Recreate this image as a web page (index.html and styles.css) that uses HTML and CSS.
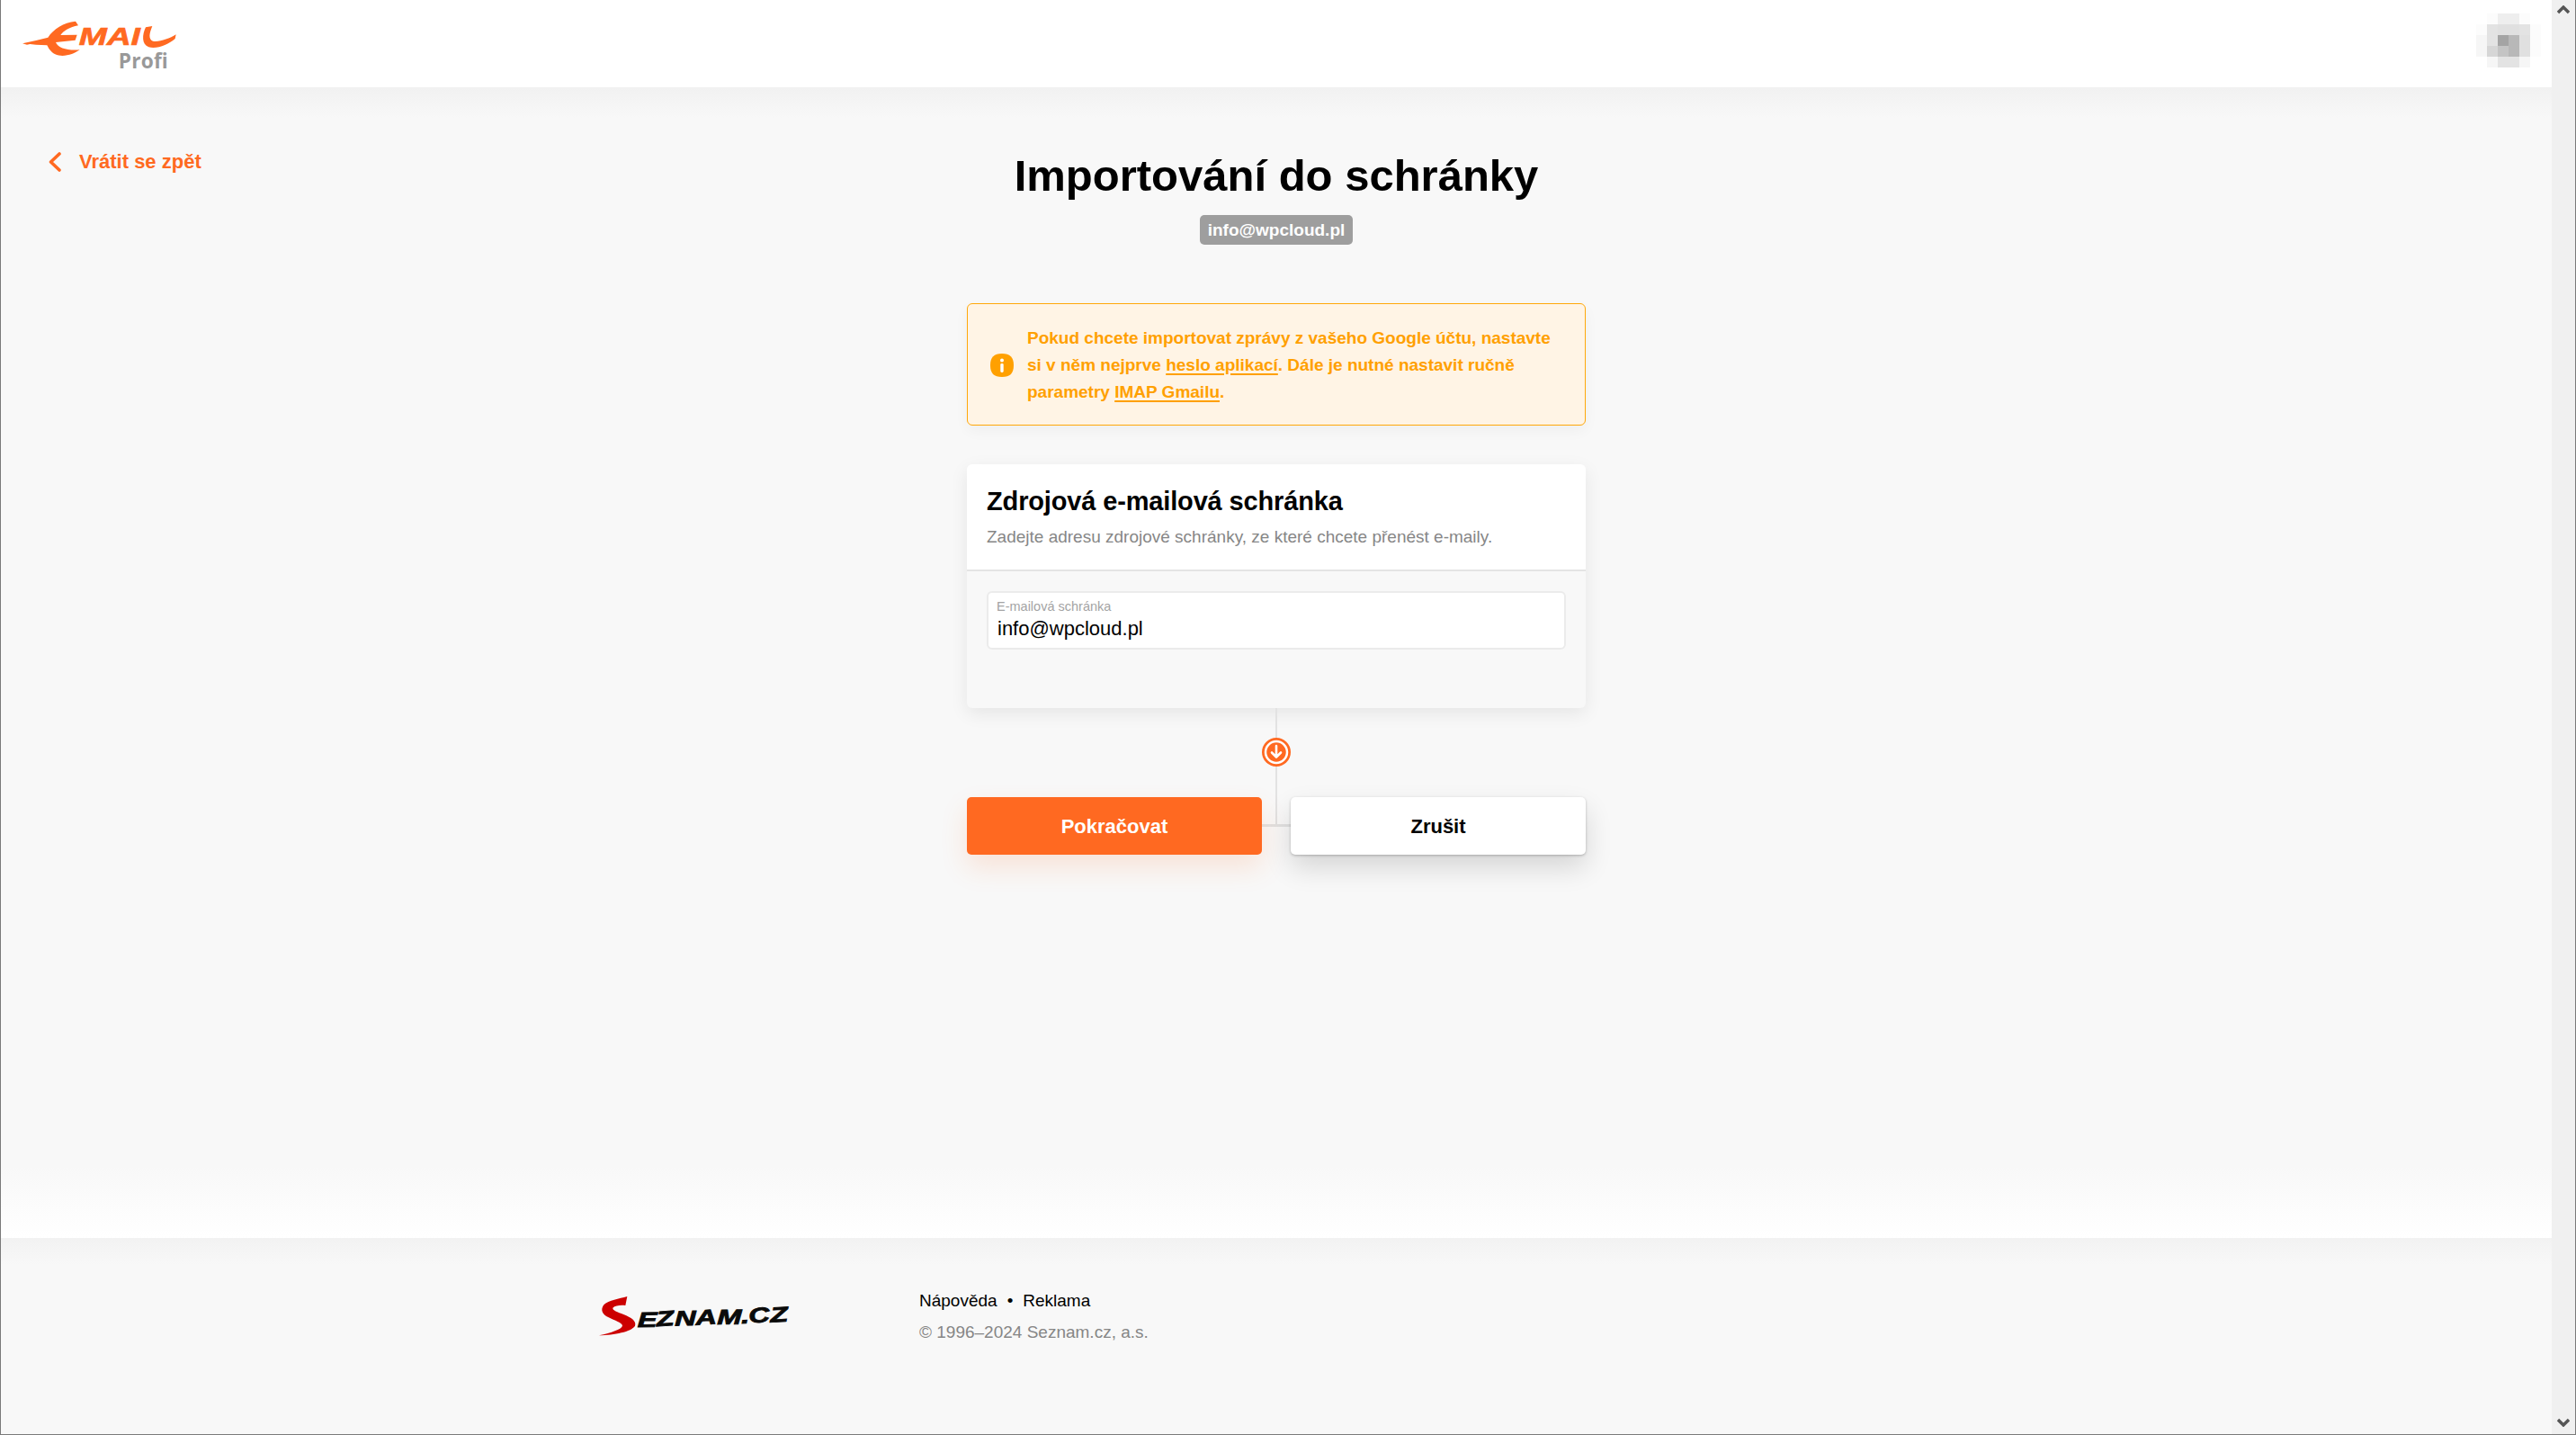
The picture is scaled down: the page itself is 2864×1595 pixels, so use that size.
FILE: index.html
```html
<!DOCTYPE html>
<html lang="cs">
<head>
<meta charset="utf-8">
<title>Importování do schránky</title>
<link rel="stylesheet" href="styles.css">
</head>
<body>
<div class="window">
  <div class="page">
    <header class="topbar">
      <a class="logo" href="#">
        <svg class="logo-svg" viewBox="0 0 540 210" width="180" height="70">
          <path class="brand-fill" d="M15 100 L60 90 L100 80 C118 52 152 30 192 26 L201 40 C172 46 152 58 142 72 L197 71 L191 89 L126 96 C134 116 165 124 206 121 C186 136 150 148 124 136 C108 128 101 114 97 106 L60 104 L40 102 L30 104 Z"/>
          <text class="logo-mail" x="203" y="104" textLength="205" lengthAdjust="spacingAndGlyphs">MAI</text>
          <path class="brand-fill" d="M426 46 L448 42 C438 66 434 86 450 92 C470 96 505 84 527 70 L524 84 C502 104 462 120 436 112 C412 104 414 70 426 46 Z"/>
          <text class="logo-profi" x="335" y="184" textLength="165">Profi</text>
        </svg>
      </a>
      <div class="avatar" aria-hidden="true">
        <i class="c0"></i><i class="c1"></i><i class="c2"></i><i class="c2"></i><i class="c1"></i><i class="c0"></i>
        <i class="c1"></i><i class="c3"></i><i class="c4"></i><i class="c4"></i><i class="c3"></i><i class="c1"></i>
        <i class="c5"></i><i class="c3"></i><i class="c8"></i><i class="c7"></i><i class="c4"></i><i class="c1"></i>
        <i class="c5"></i><i class="c4b"></i><i class="c6"></i><i class="c7"></i><i class="c4"></i><i class="c1"></i>
        <i class="c0"></i><i class="c5"></i><i class="c3"></i><i class="c3"></i><i class="c5"></i><i class="c0"></i>
      </div>
    </header>

    <main class="main">
      <a class="back" href="#">
        <svg class="back-icon" viewBox="0 0 14 22" width="14" height="22"><path d="M12 2 L2.5 11 L12 20"/></svg>
        <span>Vrátit se zpět</span>
      </a>
      <section class="column">
        <h1 class="title">Importování do schránky</h1>
        <div class="pill-row"><span class="pill">info@wpcloud.pl</span></div>

        <div class="alert">
          <svg class="alert-icon" viewBox="0 0 26 26" width="26" height="26">
            <path class="alert-shape" d="M13 0 C22 0 26 4 26 13 C26 22 22 26 13 26 C4 26 0 22 0 13 C0 4 4 0 13 0 Z"/>
            <circle class="alert-i" cx="13" cy="7.5" r="2"/>
            <rect class="alert-i" x="11.3" y="11" width="3.4" height="10" rx="1.4"/>
          </svg>
          <p class="alert-text">Pokud chcete importovat zprávy z vašeho Google účtu, nastavte si v něm nejprve <a href="#">heslo aplikací</a>. Dále je nutné nastavit ručně parametry <a href="#">IMAP Gmailu</a>.</p>
        </div>

        <div class="card">
          <div class="card-head">
            <h2 class="card-title">Zdrojová e-mailová schránka</h2>
            <p class="card-sub">Zadejte adresu zdrojové schránky, ze které chcete přenést e-maily.</p>
          </div>
          <div class="card-body">
            <div class="field">
              <label class="field-label">E-mailová schránka</label>
              <div class="field-value">info@wpcloud.pl</div>
            </div>
          </div>
        </div>

        <div class="connector">
          <svg class="connector-icon" viewBox="0 0 32 32" width="32" height="32">
            <circle class="conn-disc" cx="16" cy="16" r="16"/>
            <circle class="conn-ring" cx="16" cy="16" r="12"/>
            <path class="conn-arrow" d="M16 9 V21 M11 16.5 L16 21.5 L21 16.5"/>
          </svg>
        </div>

        <div class="actions">
          <button class="btn btn-primary">Pokračovat</button>
          <button class="btn btn-secondary">Zrušit</button>
        </div>
      </section>
    </main>

    <footer class="footer">
      <svg class="seznam" viewBox="0 0 675 180" width="225" height="60">
        <path class="seznam-s" d="M112 18 L106 48 C90 46 72 48 64 56 C62 64 80 70 100 78 C125 88 144 100 138 116 C125 136 70 146 18 148 C60 138 92 128 96 116 C96 106 70 98 50 88 C28 78 22 62 34 46 C50 30 85 26 112 18 Z"/>
        <text class="seznam-text" x="146" y="120" textLength="504" lengthAdjust="spacingAndGlyphs" rotate="2 -3 1 -2 2 0 -4 -2" transform="rotate(-2 146 120)">EZNAM.CZ</text>
      </svg>
      <div class="footer-text">
        <nav class="footer-links"><a href="#">Nápověda</a><span class="dot">•</span><a href="#">Reklama</a></nav>
        <p class="copyright">© 1996–2024 Seznam.cz, a.s.</p>
      </div>
    </footer>
  </div>

  <div class="scrollbar">
    <svg viewBox="0 0 14 10" width="14" height="10"><path d="M1 8 L7 2 L13 8"/></svg>
    <svg viewBox="0 0 14 10" width="14" height="10"><path d="M1 2 L7 8 L13 2"/></svg>
  </div>
</div>
</body>
</html>
```

FILE: styles.css
```css
* { box-sizing: border-box; }
html, body { margin: 0; padding: 0; }
body { font-family: "Liberation Sans", Arial, sans-serif; color: #000; background: #fff; }
a { color: inherit; }

.window {
  width: 2864px; height: 1595px;
  display: flex;
  border-left: 1px solid #7a7a7a;
  border-right: 1px solid #7a7a7a;
  border-bottom: 1px solid #7a7a7a;
  overflow: hidden;
}
.page { flex: 1; display: flex; flex-direction: column; min-width: 0; }

/* header */
.topbar {
  height: 97px; flex: none;
  background: #fff;
  display: flex; justify-content: space-between;
  padding: 15px 12px 0 19px;
}
.logo { display: block; height: 70px; }
.logo-svg { display: block; }
.brand-fill { fill: #ff6921; }
.logo-mail { font: italic 700 84px "Liberation Sans", sans-serif; fill: #ff6921; stroke: #ff6921; stroke-width: 2; }
.logo-profi { font: 700 68px "Open Sans", sans-serif; fill: #999; }
.avatar {
  display: grid; grid-template-columns: repeat(6, 12px); grid-auto-rows: 12px;
  width: 72px; height: 60px;
}
.c0 { background: #fff; } .c1 { background: #fcfcfc; } .c2 { background: #eeeeee; }
.c3 { background: #e3e3e3; } .c4 { background: #e0e0e0; } .c4b { background: #d6d6d6; }
.c5 { background: #f6f6f6; } .c6 { background: #c4c4c4; } .c7 { background: #b8b8b8; }
.c8 { background: #a4a4a4; }

/* main */
.main {
  flex: 1; min-height: 0;
  display: grid; grid-template-columns: 1fr 688px 1fr;
  background:
    linear-gradient(#f1f1f1, #f8f8f8 34px, #f8f8f8 calc(100% - 80px), #ffffff 100%);
}
.back {
  display: flex; align-items: center; align-self: start; justify-self: start;
  gap: 20px;
  margin: 71px 0 0 53px;
  color: #ff6921; font-size: 22px; font-weight: 700; text-decoration: none;
  line-height: 24px;
}
.back-icon { fill: none; stroke: #ff6921; stroke-width: 3.6; stroke-linecap: round; stroke-linejoin: round; }

.column { grid-column: 2; display: flex; flex-direction: column; }
.title {
  margin: 68px 0 0; text-align: center;
  font-size: 49px; font-weight: 700; line-height: 60px;
}
.pill-row { display: flex; justify-content: center; margin-top: 14px; }
.pill {
  height: 33px; padding: 0 9px;
  display: flex; align-items: center;
  background: #9e9e9e; color: #fff; border-radius: 5px;
  font-size: 19px; font-weight: 700;
}

.alert {
  margin-top: 65px; height: 136px;
  display: flex; align-items: center; gap: 14px;
  padding: 1px 24px 0 26px;
  background: #fff4e5; border: 1px solid #ffa80a; border-radius: 6px;
  box-shadow: 0 6px 16px rgba(0,0,0,.04);
}
.alert-icon { flex: none; margin-left: -1px; margin-right: 1px; }
.alert-shape { fill: #ffa000; }
.alert-i { fill: #fff; }
.alert-text { margin: 0; color: #ffa000; font-size: 19px; font-weight: 700; line-height: 30px; }
.alert-text a { text-decoration-thickness: 2px; text-underline-offset: 3px; }

.card {
  margin-top: 43px; height: 271px;
  border-radius: 6px; overflow: hidden;
  display: flex; flex-direction: column;
  box-shadow: 0 6px 20px rgba(0,0,0,.08);
  background: #f8f8f8;
}
.card-head { height: 119px; flex: none; background: #fff; border-bottom: 2px solid #e4e4e4; padding: 23px 22px 0; }
.card-title { margin: 0; font-size: 29px; font-weight: 700; line-height: 36px; letter-spacing: -.15px; }
.card-sub { margin: 8px 0 0; font-size: 19px; line-height: 28px; color: #868686; }
.card-body { padding: 22px 22px 0; }
.field {
  height: 65px; background: #fff; border: 2px solid #ebebeb; border-radius: 6px;
  padding: 7px 10px 0 9px;
}
.field-label { display: block; font-size: 14.5px; line-height: 16px; color: #a4a4a4; }
.field-value { font-size: 22px; line-height: 26px; margin: 4px 0 0 1px; }

.connector {
  height: 99px; display: flex; justify-content: center; align-items: flex-start;
  padding-top: 33px; position: relative;
}
.connector::before {
  content: ""; position: absolute; left: 50%; top: 0; bottom: 0; width: 2px; margin-left: -1px;
  background: #e2e2e2;
}
.connector-icon { position: relative; display: block; }
.conn-disc { fill: #ff6921; }
.conn-ring { fill: #ff6921; stroke: #fff; stroke-width: 2.5; }
.conn-arrow { fill: none; stroke: #fff; stroke-width: 2.6; stroke-linecap: round; stroke-linejoin: round; }

.actions { position: relative; display: flex; justify-content: space-between; height: 64px; }
.actions::before {
  content: ""; position: absolute; left: 50%; top: 0; height: 32px; width: 2px; margin-left: -1px; background: #e2e2e2;
}
.actions::after {
  content: ""; position: absolute; left: 0; right: 0; top: 30px; height: 3px; background: #e2e2e2;
}
.btn {
  position: relative; z-index: 1;
  width: 328px; height: 64px; border: 0; border-radius: 5px; padding: 1px 0 0;
  font: 700 22px "Liberation Sans", sans-serif;
}
.btn-primary { background: #ff6921; color: #fff; box-shadow: 0 14px 30px rgba(255,105,33,.15); }
.btn-secondary { background: #fff; color: #000; box-shadow: 0 1px 3px rgba(0,0,0,.25), 0 14px 30px rgba(0,0,0,.14); }

/* footer */
.footer {
  height: 218px; flex: none;
  background: linear-gradient(#f2f2f2, #f8f8f8 30px);
  display: flex; align-items: flex-start;
  padding: 59px 0 0 659px;
}
.seznam { flex: none; display: block; }
.seznam-s { fill: #cc0000; }
.seznam-text { font: italic 700 70px "Liberation Sans", sans-serif; fill: #0a0a0a; stroke: #0a0a0a; stroke-width: 2.5; }
.footer-text { margin: 0 0 0 137px; }
.footer-links { display: flex; font-size: 19px; line-height: 22px; }
.footer-links a { text-decoration: none; color: #000; }
.dot { margin: 0 11px; }
.copyright { margin: 13px 0 0; font-size: 19px; line-height: 22px; color: #868686; }

/* scrollbar */
.scrollbar {
  width: 26px; flex: none; background: #f0f0f0;
  display: flex; flex-direction: column; justify-content: space-between; align-items: center;
  padding: 6px 0 8px;
}
.scrollbar svg { fill: none; stroke: #555; stroke-width: 3.4; display: block; }
```
